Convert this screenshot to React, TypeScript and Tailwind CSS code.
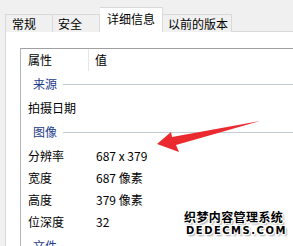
import React from "react";

const font = { fontFamily: '"Noto Sans CJK SC", "Noto Sans", sans-serif' };

function Row({ name, value }: { name: string; value?: string }) {
  return (
    <div className="flex h-[22px] items-center text-[12px] text-black">
      <div className="w-[75px] pl-[7px] shrink-0">{name}</div>
      <div>{value}</div>
    </div>
  );
}

function Group({ name }: { name: string }) {
  return (
    <div className="flex h-[26px] items-center text-[12px] text-[#1e3c8c]">
      <div className="pl-[12px] pr-[6px]">{name}</div>
      <div className="flex-1 h-px bg-[#c5ccd8]" />
    </div>
  );
}

const halo =
  "1px 0 0 #fff,-1px 0 0 #fff,0 1px 0 #fff,0 -1px 0 #fff,1px 1px 0 #fff,-1px -1px 0 #fff,1px -1px 0 #fff,-1px 1px 0 #fff,2px 2px 2px #999";

export default function App() {
  return (
    <div
      className="relative w-[293px] h-[246px] overflow-hidden bg-[#f0f0f0] flex flex-col pl-[5px] pt-[7px]"
      style={font}
    >
      <div className="flex items-end h-[24px] text-[12px] text-black relative z-10">
        <div className="w-[48px] h-[18px] border border-b-0 border-[#d9d9d9] bg-[#f0f0f0] flex items-center pl-[6px] mb-[-1px]">常规</div>
        <div className="w-[47px] h-[18px] border border-b-0 border-l-0 border-[#d9d9d9] bg-[#f0f0f0] flex items-center pl-[5px] mb-[-1px]">安全</div>
        <div className="w-[63px] h-[25px] border border-b-0 border-l-0 border-[#d9d9d9] bg-white flex items-center pl-[7px] pb-[2px] mb-[-1px]">详细信息</div>
        <div className="w-[69px] h-[18px] border border-b-0 border-l-0 border-[#d9d9d9] bg-[#f0f0f0] flex items-center pl-[5px] mb-[-1px]">以前的版本</div>
      </div>
      <div className="flex-1 bg-white border-l border-t border-[#d9d9d9] pl-[14px] pt-[16px] flex flex-col">
        <div className="flex-1 border-l border-t border-l-[#b4b4b4] border-t-[#a0a0a0] flex flex-col">
          <div className="flex h-[22px] items-stretch text-[12px] text-black">
            <div className="w-[68px] pl-[7px] flex items-center border-r border-[#e5e5e5]">属性</div>
            <div className="pl-[6px] flex items-center">值</div>
          </div>
          <Group name="来源" />
          <Row name="拍摄日期" />
          <Group name="图像" />
          <Row name="分辨率" value="687 x 379" />
          <Row name="宽度" value="687 像素" />
          <Row name="高度" value="379 像素" />
          <Row name="位深度" value="32" />
          <Group name="文件" />
        </div>
      </div>

      <svg className="absolute left-0 top-0" width="293" height="246" viewBox="0 0 293 246">
        <polygon
          points="157,144 171,132 172,137 260,121 176,145 179,152"
          fill="#ea2a2f"
        />
      </svg>

      <div
        className="absolute left-[184px] top-[211px] flex flex-col items-start font-bold text-black leading-none whitespace-nowrap"
        style={{ textShadow: halo }}
      >
        <div className="text-[12px] tracking-[0.4px]">织梦内容管理系统</div>
        <div
          className="text-[10px] leading-[12px] tracking-[1.5px] mt-[2px] pl-[2px]"
          style={{ fontFamily: '"DejaVu Sans", sans-serif', fontWeight: 700 }}
        >
          DEDECMS.COM
        </div>
      </div>
    </div>
  );
}
